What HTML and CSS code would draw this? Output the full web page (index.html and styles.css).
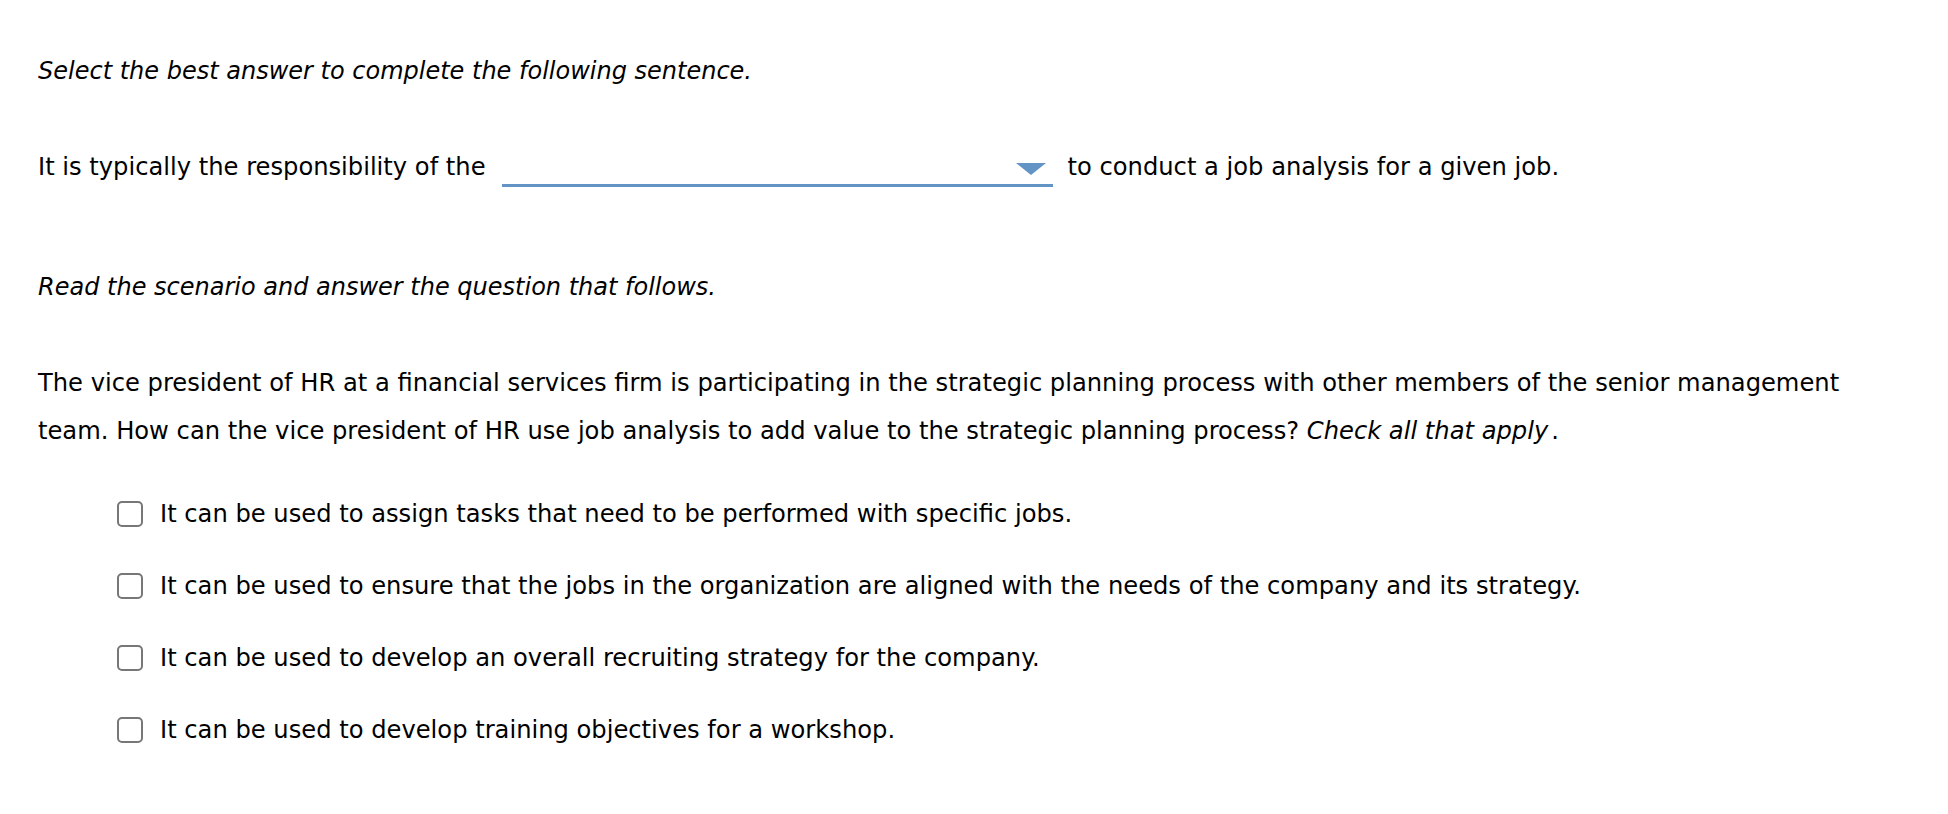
FILE: index.html
```html
<!DOCTYPE html>
<html>
<head>
<meta charset="utf-8">
<link rel="stylesheet" href="styles.css">
</head>
<body>
<div class="page">
  <p class="instr first">Select the best answer to complete the following sentence.</p>
  <div class="sentence">
    <span>It is typically the responsibility of the</span>
    <span class="dropdown"><span class="caret"></span></span>
    <span>to conduct a job analysis for a given job.</span>
  </div>
  <p class="instr second">Read the scenario and answer the question that follows.</p>
  <p class="para">The vice president of HR at a financial services firm is participating in the strategic planning process with other members of the senior management team. How can the vice president of HR use job analysis to add value to the strategic planning process? <em>Check all that apply</em>.</p>
  <ul class="options">
    <li class="option"><span class="box"></span><span>It can be used to assign tasks that need to be performed with specific jobs.</span></li>
    <li class="option"><span class="box"></span><span>It can be used to ensure that the jobs in the organization are aligned with the needs of the company and its strategy.</span></li>
    <li class="option"><span class="box"></span><span>It can be used to develop an overall recruiting strategy for the company.</span></li>
    <li class="option"><span class="box"></span><span>It can be used to develop training objectives for a workshop.</span></li>
  </ul>
</div>
</body>
</html>
```
FILE: styles.css
```css
html, body {
  margin: 0;
  padding: 0;
  background: #fff;
}
.page {
  font-family: "DejaVu Sans", Verdana, sans-serif;
  font-size: 24.2px;
  color: #000;
  padding: 47px 88px 0 38px;
}
.instr {
  margin: 0;
  font-size: 24px;
  font-style: italic;
  line-height: 48px;
}
.sentence {
  margin-top: 48px;
  display: flex;
  align-items: flex-start;
  line-height: 48px;
  height: 48px;
}
.dropdown {
  display: flex;
  justify-content: flex-end;
  align-items: flex-end;
  box-sizing: border-box;
  width: 551px;
  height: 44px;
  margin: 0 15px 0 16px;
  border-bottom: 3px solid #6394c6;
  padding: 0 7px 9px 0;
}
.caret {
  width: 0;
  height: 0;
  border-left: 15px solid transparent;
  border-right: 15px solid transparent;
  border-top: 12px solid #6394c6;
}
.second {
  margin-top: 72px;
}
.para {
  margin: 48px 0 0 0;
  line-height: 48px;
}
.para em {
  padding-right: 3px;
}
.options {
  list-style: none;
  margin: 23px 0 0 0;
  padding: 0 0 0 79px;
}
.option {
  display: flex;
  align-items: center;
  height: 72px;
  gap: 17px;
}
.box {
  box-sizing: border-box;
  width: 26px;
  height: 26px;
  border: 2px solid #777;
  border-radius: 5px;
  flex: none;
}
```
